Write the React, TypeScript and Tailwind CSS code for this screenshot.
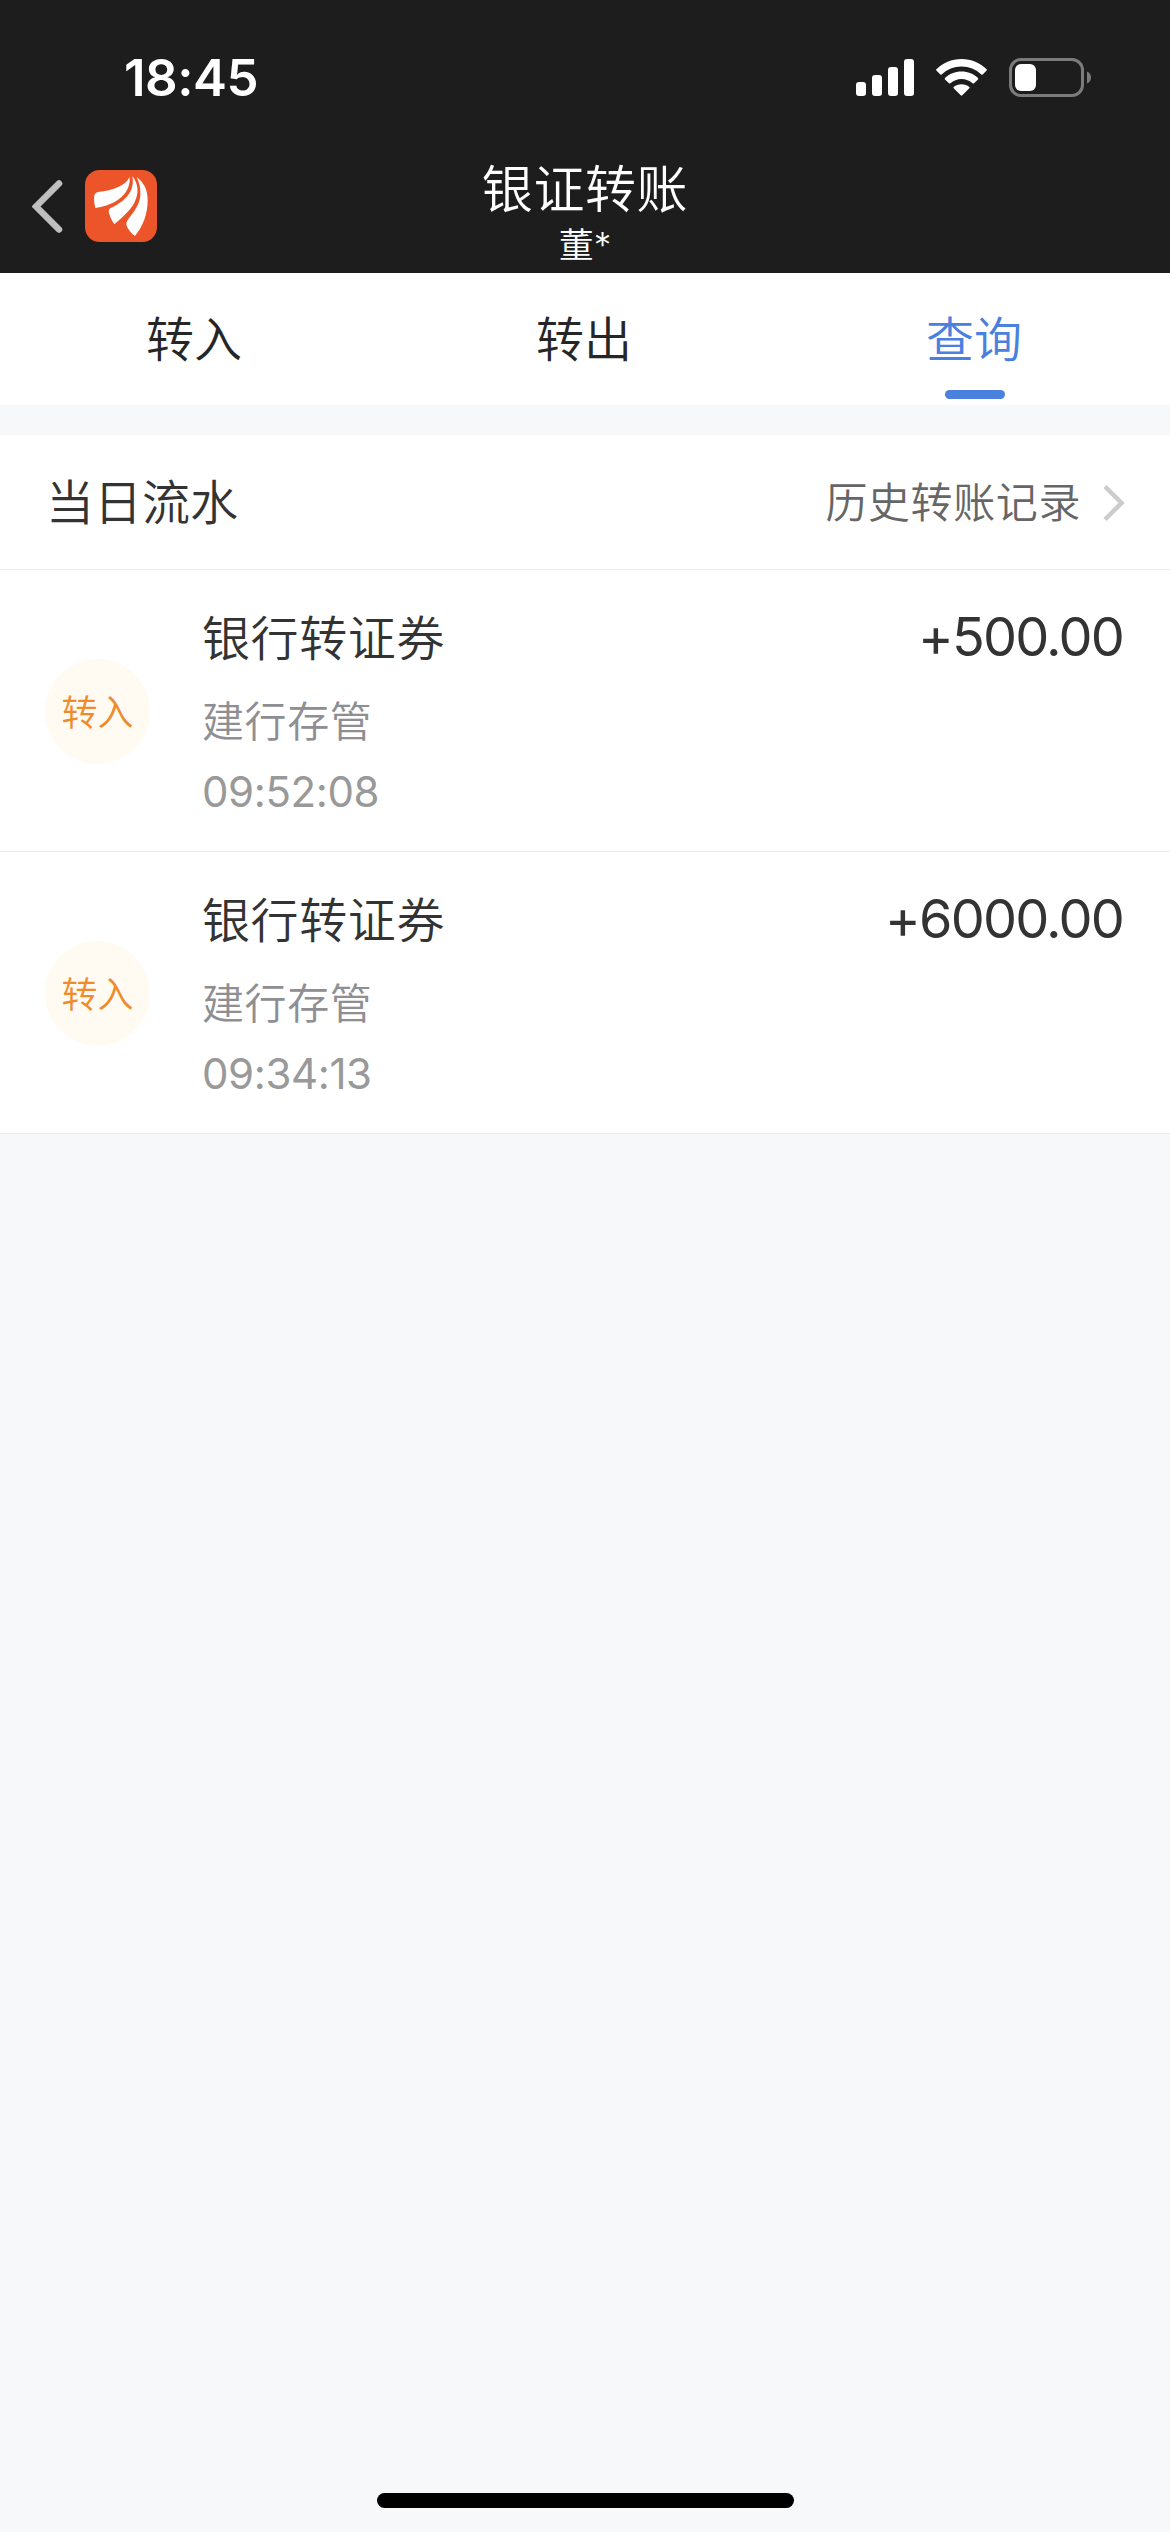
import React from "react";

interface TransferRowInterface {
  title: string;
  bank: string;
  time: string;
  amount: string;
}

interface TabInterface {
  label: string;
  active?: boolean;
}

const SignalIcon = () => (
  <svg width="58" height="37" viewBox="0 0 58 37" fill="white">
    <rect x="0" y="23" width="10" height="14" rx="3" />
    <rect x="16" y="16" width="10" height="21" rx="3" />
    <rect x="32" y="8" width="10" height="29" rx="3" />
    <rect x="48" y="0" width="10" height="37" rx="3" />
  </svg>
);

const WifiIcon = () => (
  <svg width="51" height="37" viewBox="0 0 51 37" fill="white">
    <path d="M25.5 0C35.3 0 44.2 3.8 50.6 10.2Q51.2 10.9 50.6 11.6L46.7 15.5Q46 16.1 45.3 15.5C40 10.5 33 7.6 25.5 7.6S11 10.5 5.7 15.5Q5 16.1 4.3 15.5L.4 11.6Q-.2 10.9 .4 10.2C6.8 3.8 15.7 0 25.5 0Z" />
    <path d="M25.5 12.6C31.9 12.6 37.7 15 42 19Q42.6 19.7 42 20.4L38 24.3Q37.3 24.9 36.6 24.3C33.6 21.7 29.7 20.1 25.5 20.1S17.4 21.7 14.4 24.3Q13.7 24.9 13 24.3L9 20.4Q8.4 19.7 9 19C13.3 15 19.1 12.6 25.5 12.6Z" />
    <path d="M25.5 25.2C28.5 25.2 31.2 26.2 33.3 27.9Q34 28.6 33.3 29.3L26.3 36.3Q25.5 37 24.7 36.3L17.7 29.3Q17 28.6 17.7 27.9C19.8 26.2 22.5 25.2 25.5 25.2Z" />
  </svg>
);

const BatteryIcon = () => (
  <svg width="82" height="39" viewBox="0 0 82 39">
    <rect x="1.5" y="1.5" width="72" height="36" rx="10.5" fill="none" stroke="#7b7b7b" strokeWidth="3" />
    <rect x="6" y="6" width="21" height="27" rx="6" fill="white" />
    <path d="M78 13.5C80.5 14.5 82 16.8 82 19.5S80.5 24.5 78 25.5Z" fill="#7b7b7b" />
  </svg>
);

const LogoIcon = () => (
  <svg width="72" height="72" viewBox="0 0 216 216">
    <rect width="216" height="216" rx="44" fill="#ec5529" />
    <g fill="white">
      <path d="M134 21C121 47 88 61 38 66Q30 68 28 76C26 88 28 101 31 114C76 107 106 90 123 65C133 50 135 35 134 21Z" />
      <path d="M142 18C160 41 163 69 148 98C137 119 111 143 88 163C80 152 73 137 71 124Q71 117 77 114C104 101 124 86 136 65C144 50 145 34 142 18Z" />
      <path d="M155 21C177 38 188 60 188 90C188 134 173 170 150 198C139 191 129 178 124 165Q122 157 128 150C148 124 163 105 166 78C168 56 163 38 155 21Z" />
    </g>
  </svg>
);

const Tab = ({ label, active }: TabInterface) => {
  return (
    <div className="flex flex-col items-center">
      <span className={`mt-[27px] mr-[2px] h-[72px] text-[48px] leading-[72px] ${active ? "text-[#4a80de]" : "text-[#262626]"}`}>
        {label}
      </span>
      {active && <div className="mt-[18px] h-[9px] w-[60px] rounded-full bg-[#4a80de]" />}
    </div>
  );
};

const TransferRow = ({ title, bank, time, amount }: TransferRowInterface) => {
  return (
    <div className="flex h-[282px] border-b border-[#ebebeb] bg-white pr-[47px] pl-[45px]">
      <div className="mt-[89px] flex h-[105px] w-[105px] shrink-0 justify-center rounded-full bg-[#fffbf2]">
        <span className="text-[36px] leading-[102px] text-[#f08b2c]">转入</span>
      </div>
      <div className="ml-[52px] flex flex-col">
        <p className="mt-[29px] text-[48px] leading-[72px] tracking-[0.6px] text-[#333333]">{title}</p>
        <p className="mt-[18px] text-[42px] leading-[60px] tracking-[0.6px] text-[#8e8e93]">{bank}</p>
        <p className="mt-[13px] font-[Inter] text-[42px] leading-[60px] font-normal tracking-[-0.4px] text-[#999999]">{time}</p>
      </div>
      <p className="mt-[31px] ml-auto font-[Inter] text-[54px] leading-[72px] font-normal tracking-[-1.8px] text-[#333333]">{amount}</p>
    </div>
  );
};

const App = () => {
  const transfers = [
    { title: "银行转证券", bank: "建行存管", time: "09:52:08", amount: "+500.00" },
    { title: "银行转证券", bank: "建行存管", time: "09:34:13", amount: "+6000.00" },
  ];

  return (
    <div className="flex h-[2532px] w-[1170px] flex-col overflow-hidden bg-[#f7f8fa] font-['Noto_Sans_CJK_SC',sans-serif] font-[350]">
      <header className="h-[273px] bg-[#1d1d1d] text-white">
        <div className="flex h-[155px] items-center pr-[79px] pl-[124px]">
          <span className="font-[Inter] text-[51px] leading-[60px] font-semibold tracking-[-0.5px]">18:45</span>
          <div className="ml-auto flex items-center">
            <SignalIcon />
            <div className="mr-[22px] ml-[22px]">
              <WifiIcon />
            </div>
            <BatteryIcon />
          </div>
        </div>
        <div className="grid h-[118px] grid-cols-3">
          <div className="flex items-start pt-[15px] pl-[32px]">
            <svg className="mt-[10px]" width="31" height="54" viewBox="0 0 31 54" fill="none" stroke="#bfbfbf" strokeWidth="6.5">
              <path d="M27 3.5L4 26.5L27 49.5" strokeLinecap="round" />
            </svg>
            <div className="ml-[22px]">
              <LogoIcon />
            </div>
          </div>
          <div className="flex flex-col items-center font-[Inter,'Noto_Sans_CJK_SC',sans-serif]">
            <h1 className="mt-[5px] text-[51px] leading-[60px] tracking-[0.6px]">银证转账</h1>
            <p className="mt-[4px] text-[35px] leading-[42px]">董*</p>
          </div>
        </div>
      </header>

      <nav className="grid h-[132px] grid-cols-3 bg-white">
        <Tab label="转入" />
        <Tab label="转出" />
        <Tab label="查询" active />
      </nav>

      <main className="mt-[30px]">
        <div className="flex h-[135px] items-center border-b border-[#ebebeb] bg-white pr-[45px] pl-[46px]">
          <h2 className="-mt-[6px] text-[48px] leading-[72px] text-[#333333]">当日流水</h2>
          <span className="-mt-[4px] ml-auto text-[42px] leading-[60px] tracking-[0.6px] text-[#666666]">历史转账记录</span>
          <svg className="mt-px ml-[22px]" width="22" height="38" viewBox="0 0 22 38" fill="none" stroke="#cccccc" strokeWidth="4.5">
            <path d="M2 2.5L18.5 19L2 35.5" />
          </svg>
        </div>
        {transfers.map((item) => (
          <TransferRow key={item.time} {...item} />
        ))}
      </main>

      <div className="mx-auto mt-auto mb-[24px] h-[15px] w-[417px] rounded-full bg-black" />
    </div>
  );
};

export default App;
